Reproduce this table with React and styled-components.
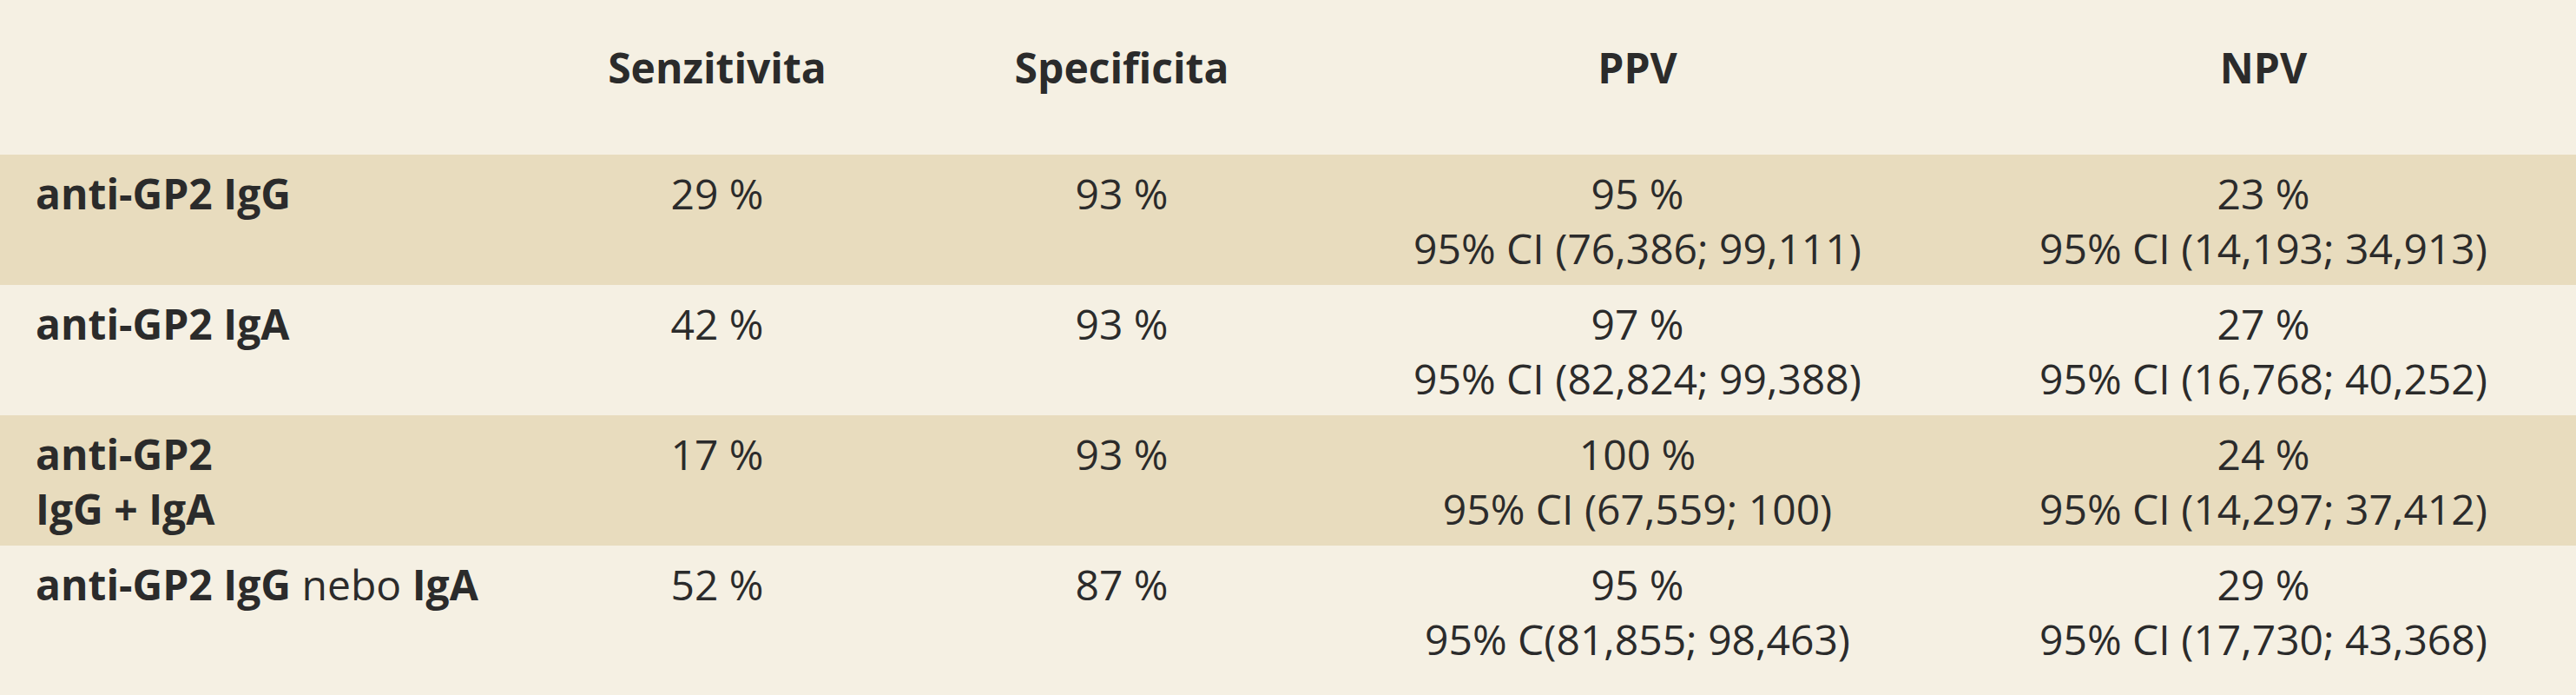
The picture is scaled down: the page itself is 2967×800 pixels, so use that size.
import React from "react"
import styled, { createGlobalStyle } from "styled-components"

const GlobalStyle = createGlobalStyle`
  html, body {
    margin: 0;
    padding: 0;
    background: #f5f0e3;
  }
  body {
    font-family: "Open Sans", "Noto Sans", sans-serif;
    color: #2b2b2b;
  }
`

const Table = styled.div`
  width: 2967px;
  min-height: 800px;
  background: #f5f0e3;
  padding-bottom: 22px;
  box-sizing: border-box;
`

const Row = styled.div`
  display: grid;
  grid-template-columns: 593px 466px 466px 722px 720px;
  background: ${props => (props.shaded ? "#e8dcbe" : "transparent")};
`

const HeadRow = styled(Row)`
  height: 178px;
  padding-top: 46px;
  box-sizing: border-box;
`

const Cell = styled.div`
  font-size: 48px;
  line-height: 63px;
  text-align: ${props => (props.left ? "left" : "center")};
  padding: ${props => (props.left ? "0 0 0 41px" : "0")};
  font-weight: ${props => (props.bold ? 700 : 400)};
`

const BodyCell = styled(Cell)`
  padding-top: 13px;
  padding-bottom: 11px;
  height: 150px;
  box-sizing: border-box;
`

const Strong = styled.b`
  font-weight: 700;
`

const headers = ["", "Senzitivita", "Specificita", "PPV", "NPV"]

const rows = [
  {
    label: <Strong>anti-GP2 IgG</Strong>,
    sens: "29 %",
    spec: "93 %",
    ppv: ["95 %", "95% CI (76,386; 99,111)"],
    npv: ["23 %", "95% CI (14,193; 34,913)"],
  },
  {
    label: <Strong>anti-GP2 IgA</Strong>,
    sens: "42 %",
    spec: "93 %",
    ppv: ["97 %", "95% CI (82,824; 99,388)"],
    npv: ["27 %", "95% CI (16,768; 40,252)"],
  },
  {
    label: (
      <>
        <Strong>anti-GP2</Strong>
        <br />
        <Strong>IgG + IgA</Strong>
      </>
    ),
    sens: "17 %",
    spec: "93 %",
    ppv: ["100 %", "95% CI (67,559; 100)"],
    npv: ["24 %", "95% CI (14,297; 37,412)"],
  },
  {
    label: (
      <>
        <Strong>anti-GP2 IgG</Strong> nebo <Strong>IgA</Strong>
      </>
    ),
    sens: "52 %",
    spec: "87 %",
    ppv: ["95 %", "95% C(81,855; 98,463)"],
    npv: ["29 %", "95% CI (17,730; 43,368)"],
  },
]

const Lines = ({ items }) => (
  <>
    {items[0]}
    <br />
    {items[1]}
  </>
)

export default function App() {
  return (
    <>
      <GlobalStyle />
      <Table>
        <HeadRow>
          {headers.map((h, i) => (
            <Cell key={i} bold>
              {h}
            </Cell>
          ))}
        </HeadRow>
        {rows.map((r, i) => (
          <Row key={i} shaded={i % 2 === 0}>
            <BodyCell left>{r.label}</BodyCell>
            <BodyCell>{r.sens}</BodyCell>
            <BodyCell>{r.spec}</BodyCell>
            <BodyCell>
              <Lines items={r.ppv} />
            </BodyCell>
            <BodyCell>
              <Lines items={r.npv} />
            </BodyCell>
          </Row>
        ))}
      </Table>
    </>
  )
}
